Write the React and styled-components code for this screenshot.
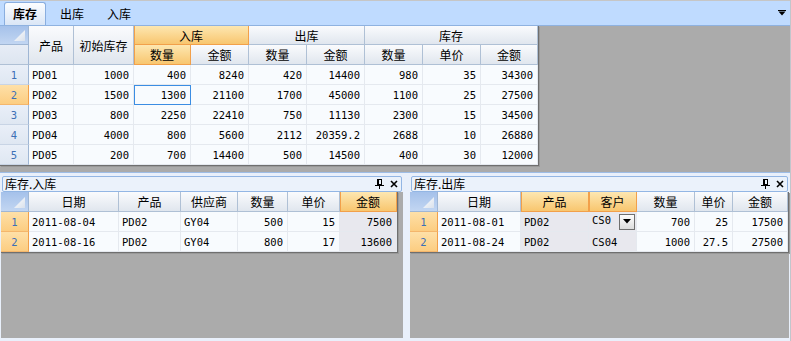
import React from 'react';
import styled, { createGlobalStyle, css } from 'styled-components';

const CJK = `"Noto Sans CJK SC", "Noto Sans", sans-serif`;
const MONO = `"DejaVu Sans Mono", "Liberation Mono", monospace`;

const GlobalStyle = createGlobalStyle`
  html, body {
    margin: 0;
    padding: 0;
  }
  body {
    background: #e9f0fb;
    font-family: ${CJK};
    font-size: 12px;
    color: #000;
  }
`;

const mainCols = [29, 45, 60, 57, 58, 58, 58, 58, 58, 57];
const inCols = [28, 90, 62, 57, 50, 52, 57];
const outCols = [28, 83, 68, 48, 58, 38, 55];

const stockRows = [
  ['PD01', '1000', '400', '8240', '420', '14400', '980', '35', '34300'],
  ['PD02', '1500', '1300', '21100', '1700', '45000', '1100', '25', '27500'],
  ['PD03', '800', '2250', '22410', '750', '11130', '2300', '15', '34500'],
  ['PD04', '4000', '800', '5600', '2112', '20359.2', '2688', '10', '26880'],
  ['PD05', '200', '700', '14400', '500', '14500', '400', '30', '12000'],
];

const inRows = [
  ['2011-08-04', 'PD02', 'GY04', '500', '15', '7500'],
  ['2011-08-16', 'PD02', 'GY04', '800', '17', '13600'],
];

const outRows = [
  ['2011-08-01', 'PD02', 'CS0', '700', '25', '17500'],
  ['2011-08-24', 'PD02', 'CS04', '1000', '27.5', '27500'],
];

function CornerMark() {
  return (
    <svg width="11" height="11" viewBox="0 0 11 11">
      <defs>
        <linearGradient id="cm" x1="0" y1="0" x2="1" y2="1">
          <stop offset="0" stopColor="#ffffff" />
          <stop offset="1" stopColor="#d9e1ec" />
        </linearGradient>
      </defs>
      <polygon points="11,0 11,11 0,11" fill="url(#cm)" />
    </svg>
  );
}

function PinIcon() {
  return (
    <svg width="9" height="10" viewBox="0 0 9 10">
      <rect x="2.5" y="0.5" width="4" height="5" fill="none" stroke="#000" />
      <rect x="2" y="0" width="2" height="6" fill="#000" />
      <rect x="0" y="6" width="9" height="1" fill="#000" />
      <rect x="4" y="7" width="1" height="3" fill="#000" />
    </svg>
  );
}

function CloseIcon() {
  return (
    <svg width="8" height="8" viewBox="0 0 8 8">
      <path d="M1 1 L7 7 M7 1 L1 7" stroke="#000" strokeWidth="1.6" />
    </svg>
  );
}

function MenuArrow() {
  return (
    <svg width="8" height="6" viewBox="0 0 8 6">
      <rect x="0" y="0" width="8" height="1" fill="#000" />
      <polygon points="0.5,1.5 7.5,1.5 4,5.5" fill="#000" />
    </svg>
  );
}

function DropArrow() {
  return (
    <svg width="8" height="5" viewBox="0 0 8 5">
      <polygon points="0,0 8,0 4,4.5" fill="#000" />
    </svg>
  );
}

export default function App() {
  return (
    <>
      <GlobalStyle />
      <Frame>
        <TabStrip>
          <Tab $selected>库存</Tab>
          <Tab>出库</Tab>
          <Tab>入库</Tab>
          <StripMenu>
            <MenuArrow />
          </StripMenu>
        </TabStrip>

        <DocArea>
          <Grid $cols={mainCols} $rows="19px 20px">
            <Corner>
              <CornerMark />
            </Corner>
            <HeadCell $rowSpan={2}>产品</HeadCell>
            <HeadCell $rowSpan={2}>初始库存</HeadCell>
            <HeadCell $span={2} $active>入库</HeadCell>
            <HeadCell $span={2}>出库</HeadCell>
            <HeadCell $span={3}>库存</HeadCell>
            <CornerLow />
            <HeadCell $active>数量</HeadCell>
            <HeadCell>金额</HeadCell>
            <HeadCell>数量</HeadCell>
            <HeadCell>金额</HeadCell>
            <HeadCell>数量</HeadCell>
            <HeadCell>单价</HeadCell>
            <HeadCell>金额</HeadCell>
            {stockRows.map((row, r) => (
              <React.Fragment key={row[0]}>
                <RowHead $active={r === 1}>{r + 1}</RowHead>
                {row.map((v, c) => (
                  <Cell
                    key={c}
                    $align={c === 0 ? 'left' : 'right'}
                    $focus={r === 1 && c === 2}
                  >
                    {v}
                  </Cell>
                ))}
              </React.Fragment>
            ))}
          </Grid>
        </DocArea>

        <Dock>
          <Pane $width={402}>
            <PaneTitle>
              <span>库存.入库</span>
              <PaneButtons>
                <PinIcon />
                <CloseIcon />
              </PaneButtons>
            </PaneTitle>
            <PaneBody>
              <Grid $cols={inCols} $rows="20px">
                <Corner>
                  <CornerMark />
                </Corner>
                <HeadCell>日期</HeadCell>
                <HeadCell>产品</HeadCell>
                <HeadCell>供应商</HeadCell>
                <HeadCell>数量</HeadCell>
                <HeadCell>单价</HeadCell>
                <HeadCell $active>金额</HeadCell>
                {inRows.map((row, r) => (
                  <React.Fragment key={row[0]}>
                    <RowHead $active>{r + 1}</RowHead>
                    {row.map((v, c) => (
                      <Cell key={c} $align={c < 3 ? 'left' : 'right'} $shade={c === 5}>
                        {v}
                      </Cell>
                    ))}
                  </React.Fragment>
                ))}
              </Grid>
            </PaneBody>
          </Pane>

          <Pane $width={379}>
            <PaneTitle>
              <span>库存.出库</span>
              <PaneButtons>
                <PinIcon />
                <CloseIcon />
              </PaneButtons>
            </PaneTitle>
            <PaneBody>
              <Grid $cols={outCols} $rows="20px">
                <Corner>
                  <CornerMark />
                </Corner>
                <HeadCell>日期</HeadCell>
                <HeadCell $active>产品</HeadCell>
                <HeadCell $active>客户</HeadCell>
                <HeadCell>数量</HeadCell>
                <HeadCell>单价</HeadCell>
                <HeadCell>金额</HeadCell>
                {outRows.map((row, r) => (
                  <React.Fragment key={row[0]}>
                    <RowHead $active>{r + 1}</RowHead>
                    {row.map((v, c) =>
                      r === 0 && c === 2 ? (
                        <EditCell key={c}>
                          <span>{v}</span>
                          <DropButton>
                            <DropArrow />
                          </DropButton>
                        </EditCell>
                      ) : (
                        <Cell
                          key={c}
                          $align={c < 3 ? 'left' : 'right'}
                          $shade={c === 1 || c === 2}
                        >
                          {v}
                        </Cell>
                      )
                    )}
                  </React.Fragment>
                ))}
              </Grid>
            </PaneBody>
          </Pane>
        </Dock>
      </Frame>
    </>
  );
}

const Frame = styled.div`
  width: 791px;
  height: 341px;
  box-sizing: border-box;
  border-right: 1px solid #c2c6cc;
  display: flex;
  flex-direction: column;
  overflow: hidden;
  background: #e9f0fb;
`;

const TabStrip = styled.div`
  height: 26px;
  flex: none;
  box-sizing: border-box;
  border-top: 1px solid #c6c6c6;
  border-bottom: 1px solid #8fb2e0;
  background: #bfdbff;
  display: flex;
  align-items: flex-end;
  padding-left: 4px;
  gap: 5px;
`;

const Tab = styled.div`
  height: 23px;
  box-sizing: border-box;
  padding: 0 8px;
  border: 1px solid transparent;
  border-bottom: none;
  line-height: 21px;
  font-family: ${CJK};
  font-size: 12px;
  color: #000;

  ${(p) =>
    p.$selected &&
    css`
      border-color: #8aaedf;
      border-radius: 3px 3px 0 0;
      background: linear-gradient(#fbfdff, #dae6f6);
      font-weight: bold;
    `}
`;

const StripMenu = styled.div`
  margin-left: auto;
  margin-right: 4px;
  align-self: center;
  display: flex;
`;

const DocArea = styled.div`
  height: 147px;
  flex: none;
  box-sizing: border-box;
  border-bottom: 1px solid #9ebde6;
  background: #ababab;
`;

const Grid = styled.div`
  display: grid;
  grid-template-columns: ${(p) => p.$cols.map((w) => `${w}px`).join(' ')};
  grid-template-rows: ${(p) => p.$rows};
  grid-auto-rows: 20px;
  width: max-content;
  border-right: 1px solid #6f6f6f;
  border-bottom: 1px solid #6f6f6f;
  box-shadow: 1px 1px 0 #999;
`;

const cellBase = css`
  box-sizing: border-box;
  display: flex;
  align-items: center;
  overflow: hidden;
  white-space: nowrap;
`;

const HeadCell = styled.div`
  ${cellBase}
  justify-content: center;
  grid-column: span ${(p) => p.$span || 1};
  grid-row: span ${(p) => p.$rowSpan || 1};
  border-right: 1px solid #afc0d5;
  border-bottom: 1px solid #afc0d5;
  background: linear-gradient(#fafbfd, #e0e6ee);
  font-family: ${CJK};
  font-size: 12px;
  color: #000;

  ${(p) =>
    p.$active &&
    css`
      background: linear-gradient(#fde7b1, #f8c66f);
      border-color: #f2a04a;
      box-shadow: inset 1px 0 0 #f2a04a;
    `}
`;

const Corner = styled.div`
  ${cellBase}
  align-items: flex-end;
  justify-content: flex-end;
  padding: 0 3px 3px 0;
  border-right: 1px solid #9fb6d4;
  border-bottom: 1px solid #9fb6d4;
  background: linear-gradient(#a5c1ea, #c2d6f2);
`;

const CornerLow = styled.div`
  ${cellBase}
  border-right: 1px solid #9fb6d4;
  border-bottom: 1px solid #afc0d5;
  background: linear-gradient(#e7edf6, #dde5f0);
`;

const RowHead = styled.div`
  ${cellBase}
  justify-content: center;
  font-family: ${MONO};
  font-size: 10.5px;
  color: #3d70b6;
  border-right: 1px solid #9fb6d4;
  border-bottom: 1px solid #c8d4e5;
  background: linear-gradient(#e9eff8, #dfe7f2);

  ${(p) =>
    p.$active &&
    css`
      background: linear-gradient(#fee0a8, #fccd81);
      border-right-color: #f2a04a;
      border-bottom-color: #f4b66c;
    `}
`;

const Cell = styled.div`
  ${cellBase}
  justify-content: ${(p) => (p.$align === 'right' ? 'flex-end' : 'flex-start')};
  padding: 0 4px 0 3px;
  border-right: 1px solid #e5e9ef;
  border-bottom: 1px solid #e5e9ef;
  background: ${(p) => (p.$shade ? '#e8e8ee' : '#f8fbfe')};
  font-family: ${MONO};
  font-size: 10.5px;
  color: #000;

  ${(p) =>
    p.$focus &&
    css`
      outline: 1px solid #3b8de3;
      outline-offset: -1px;
    `}
`;

const EditCell = styled.div`
  ${cellBase}
  justify-content: space-between;
  padding: 0 1px 0 3px;
  border-right: 1px solid #e5e9ef;
  border-bottom: 1px solid #e5e9ef;
  background: #e8e8ee;
  font-family: ${MONO};
  font-size: 10.5px;
  color: #000;

  span {
    align-self: flex-start;
    margin-top: 2px;
  }
`;

const DropButton = styled.div`
  width: 16px;
  height: 16px;
  box-sizing: border-box;
  border: 1px solid #6f6f6f;
  background: linear-gradient(#fdfdfd, #dcdcdc);
  display: flex;
  align-items: center;
  justify-content: center;
`;

const Dock = styled.div`
  flex: 1;
  display: flex;
  gap: 7px;
  padding: 3px 1px 3px 1px;
  background: #e9f0fb;
`;

const Pane = styled.div`
  width: ${(p) => p.$width}px;
  display: flex;
  flex-direction: column;
`;

const PaneTitle = styled.div`
  height: 16px;
  flex: none;
  box-sizing: border-box;
  margin: 0 1px;
  padding: 0 3px 0 2px;
  border: 1px solid #93b6e4;
  border-radius: 2px;
  background: #ebf2fb;
  display: flex;
  align-items: center;
  justify-content: space-between;
  font-family: ${CJK};
  font-size: 12px;
  line-height: 14px;
`;

const PaneButtons = styled.div`
  display: flex;
  align-items: center;
  gap: 6px;
`;

const PaneBody = styled.div`
  flex: 1;
  background: #ababab;
`;
